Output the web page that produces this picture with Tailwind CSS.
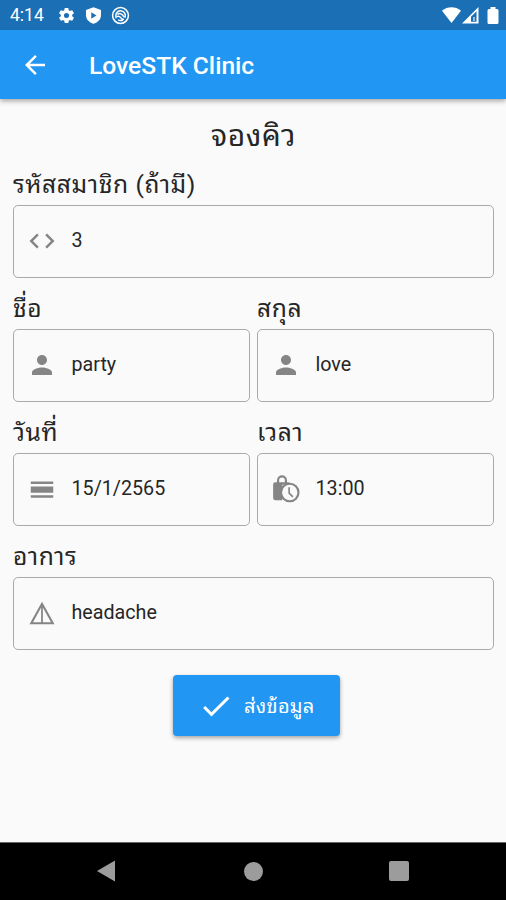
<!DOCTYPE html>
<html lang="th">
<head>
<meta charset="utf-8">
<title>LoveSTK Clinic</title>
<script src="https://cdn.jsdelivr.net/npm/@tailwindcss/browser@4"></script>
</head>
<body class="w-[506px] h-[900px] overflow-hidden bg-[#fafafa] text-[#262626] font-[Roboto,'Noto_Sans_Thai_Looped',Loma,Waree,Garuda,'Noto_Sans_Thai','Noto_Sans',sans-serif] flex flex-col">
<header class="bg-[#2196f3] h-[99px] shrink-0 shadow-[0_2px_5px_rgba(0,0,0,0.35)]">
  <div class="h-[30px] bg-[#1a6fb5] text-white flex items-center pl-[10px] pr-[7px]">
    <span class="text-[17.5px] w-[47px] leading-none pt-[2px]">4:14</span>
    <svg class="w-[19px] h-[19px]" viewBox="0 0 24 24" fill="currentColor"><path d="M19.14 12.94c.04-.3.06-.61.06-.94s-.02-.64-.07-.94l2.03-1.58a.49.49 0 0 0 .12-.61l-1.92-3.32a.49.49 0 0 0-.59-.22l-2.39.96a7 7 0 0 0-1.62-.94l-.36-2.54A.48.48 0 0 0 13.92 2.400h-3.84a.48.48 0 0 0-.48.410l-.36 2.540a7.200 7.200 0 0 0-1.620.940l-2.390-.960a.49.49 0 0 0-.59.220L2.740 8.870a.48.48 0 0 0 .12.610l2.030 1.580a6.900 6.900 0 0 0 0 1.880l-2.030 1.580a.49.49 0 0 0-.12.610l1.920 3.320c.12.22.37.29.59.22l2.390-.960c.5.38 1.030.7 1.620.94l.36 2.540c.05.24.24.41.48.41h3.840c.24 0 .44-.17.47-.41l.36-2.540a7 7 0 0 0 1.620-.940l2.390.960c.22.080.47 0 .59-.220l1.920-3.320a.48.48 0 0 0-.12-.610zM12 15.200A3.200 3.200 0 1 1 12 8.800a3.200 3.200 0 0 1 0 6.400z"/></svg>
    <svg class="ml-[8px] w-[19px] h-[19px]" viewBox="0 0 24 24" fill="currentColor" fill-rule="evenodd"><path d="M12 1.500L2.500 5V11.500c0 5.600 4 9.500 9.500 11 5.500-1.500 9.500-5.400 9.500-11V5zM9.200 8v8l6.500-4z"/></svg>
    <svg class="ml-[8px] w-[19px] h-[19px]" viewBox="0 0 24 24" fill="none" stroke="currentColor" stroke-width="1.900"><circle cx="12" cy="12" r="10"/><path d="M6.500 15.500C4.500 10 8 6 12 6c4.500 0 7.500 4.500 5.500 9M8 10.500c3-2 6.500-.5 8.500 3.500M7.500 13.500c3-1.500 4 .3 5 1.500s2 2 4 2M9 17.500c2 1 4 1 6 .2"/></svg>
    <div class="ml-auto flex items-center">
      <svg class="w-[19px] h-[16px]" viewBox="0 0 19 16" fill="currentColor"><path d="M0 3.700C5.500-.9 13.500-.9 19 3.700L9.500 16z"/></svg>
      <svg class="ml-[1px] w-[17px] h-[17px]" viewBox="0 0 17 17"><path fill="#fff" fill-rule="evenodd" d="M0 16.500L16.500 0v16.500zM9 9.700v5h5.500V4.300z"/><path fill="#fff" d="M11 10h2v4h-2z" opacity=".55"/></svg>
      <svg class="ml-[8px] w-[12px] h-[17px]" viewBox="0 0 12 17" fill="currentColor"><path d="M3.500 0h5v2H10a1.500 1.500 0 0 1 1.500 1.500v12A1.500 1.500 0 0 1 10 17H2a1.500 1.500 0 0 1-1.500-1.500v-12A1.500 1.500 0 0 1 2 2h1.500z"/></svg>
    </div>
  </div>
  <div class="h-[69px] flex items-center pl-[20px] text-white">
    <svg class="w-[30px] h-[30px]" viewBox="0 0 24 24" fill="currentColor"><path d="M20 11H7.830l5.590-5.590L12 4l-8 8 8 8 1.410-1.410L7.830 13H20z"/></svg>
    <h1 class="ml-[39px] pt-[3px] text-[24.600px] font-medium leading-none whitespace-nowrap">LoveSTK Clinic</h1>
  </div>
</header>

<main class="flex-1 pl-[13px] pr-[12px] flex flex-col">
  <h2 class="h-[64px] pt-[17px] text-center text-[30px] leading-[40px] tracking-[0.5px]">จองคิว</h2>
  <div class="flex flex-col">
    <label class="h-[42px] leading-[44px] text-[24.600px] tracking-[0.6px] whitespace-nowrap">รหัสสมาชิก (ถ้ามี)</label>
    <div class="h-[73px] border border-[#aaa] rounded-[5px] flex items-center pl-[13px] pb-[1px] text-[19.700px]">
      <svg class="w-[30px] h-[30px] text-[#858585]" viewBox="0 0 24 24" fill="currentColor"><path d="M9.400 16.600L4.800 12l4.600-4.600L8 6l-6 6 6 6zM14.600 16.600l4.600-4.600-4.600-4.600L16 6l6 6-6 6z"/></svg>
      <span class="ml-[14.500px] pb-[1px]">3</span>
    </div>
  </div>
  <div class="grid grid-cols-2 gap-x-[7px]">
    <div>
      <label class="block h-[51px] pt-[9px] leading-[44px] text-[24.600px] tracking-[0.6px]">ชื่อ</label>
      <div class="h-[73px] border border-[#aaa] rounded-[5px] flex items-center pl-[13px] pb-[1px] text-[19.700px]">
        <svg class="w-[30px] h-[30px] text-[#858585]" viewBox="0 0 24 24" fill="currentColor"><path d="M12 12c2.210 0 4-1.790 4-4s-1.790-4-4-4-4 1.790-4 4 1.790 4 4 4zm0 2c-2.670 0-8 1.340-8 4v2h16v-2c0-2.660-5.330-4-8-4z"/></svg>
        <span class="ml-[14.500px] pb-[1px]">party</span>
      </div>
    </div>
    <div>
      <label class="block h-[51px] pt-[9px] leading-[44px] text-[24.600px] tracking-[0.6px]">สกุล</label>
      <div class="h-[73px] border border-[#aaa] rounded-[5px] flex items-center pl-[13px] pb-[1px] text-[19.700px]">
        <svg class="w-[30px] h-[30px] text-[#858585]" viewBox="0 0 24 24" fill="currentColor"><path d="M12 12c2.210 0 4-1.790 4-4s-1.790-4-4-4-4 1.790-4 4 1.790 4 4 4zm0 2c-2.670 0-8 1.340-8 4v2h16v-2c0-2.660-5.330-4-8-4z"/></svg>
        <span class="ml-[14.500px] pb-[1px]">love</span>
      </div>
    </div>
    <div>
      <label class="block h-[51px] pt-[9px] leading-[44px] text-[24.600px] tracking-[0.6px]">วันที่</label>
      <div class="h-[73px] border border-[#aaa] rounded-[5px] flex items-center pl-[13px] pb-[1px] text-[19.700px]">
        <svg class="w-[30px] h-[30px] text-[#858585]" viewBox="0 0 24 24" fill="currentColor"><path d="M3 17h18v2H3zM3 10h18v5H3zM3 6h18v2H3z"/></svg>
        <span class="ml-[14.500px] pb-[1px]">15/1/2565</span>
      </div>
    </div>
    <div>
      <label class="block h-[51px] pt-[9px] leading-[44px] text-[24.600px] tracking-[0.6px]">เวลา</label>
      <div class="h-[73px] border border-[#aaa] rounded-[5px] flex items-center pl-[13px] pb-[1px] text-[19.700px]">
        <svg class="w-[30px] h-[30px] text-[#858585]" viewBox="0 0 24 24"><path fill="currentColor" fill-rule="evenodd" d="M3.500 6.500H4.800V5a4 4 0 0 1 8 0v1.500H14A2 2 0 0 1 15.800 8.500H9V21H3.500a1.800 1.800 0 0 1-1.800-1.800V8.300a1.800 1.800 0 0 1 1.800-1.800zM6.500 6.500h4.600V5a2.300 2.300 0 0 0-4.600 0z"/><circle cx="15" cy="14.800" r="7" fill="#fafafa" stroke="currentColor" stroke-width="1.700"/><path fill="none" stroke="currentColor" stroke-width="1.300" d="M14.500 10.500v4.800l3 3"/></svg>
        <span class="ml-[14.500px] pb-[1px]">13:00</span>
      </div>
    </div>
  </div>
  <div>
    <label class="block h-[51px] pt-[9px] leading-[44px] text-[24.600px] tracking-[0.6px]">อาการ</label>
    <div class="h-[73px] border border-[#aaa] rounded-[5px] flex items-center pl-[13px] pb-[1px] text-[19.700px]">
      <svg class="w-[30px] h-[30px] text-[#858585]" viewBox="0 0 24 24" fill="currentColor" fill-rule="evenodd"><path d="M12 3L2 21h20zM12.700 7.500L19.200 19.400H12.700zM11.300 7.500V19.400H4.800z"/></svg>
      <span class="ml-[14.500px] pb-[1px]">headache</span>
    </div>
  </div>
  <button class="mt-[25px] self-center ml-[6px] w-[167px] h-[61px] rounded-[4px] bg-[#2196f3] text-white shadow-[0_2px_4px_rgba(0,0,0,0.35)] flex items-center pl-[25px]">
    <svg class="w-[36px] h-[36px]" viewBox="0 0 24 24" fill="currentColor"><path d="M9 16.170L4.830 12l-1.420 1.410L9 19 21 7l-1.410-1.410z"/></svg>
    <span class="ml-[10px] pt-[1px] text-[20px] tracking-[0.3px] whitespace-nowrap">ส่งข้อมูล</span>
  </button>
</main>

<nav class="h-[58px] shrink-0 bg-black border-t border-[#666] text-[#9c9c9c] flex items-center pl-[96px] pb-[1px]">
  <svg class="w-[20px] h-[22px]" viewBox="0 0 20 22" fill="currentColor"><path d="M1 11L19 .5v21z"/></svg>
  <div class="ml-[128px] w-[19px] h-[19px] rounded-full bg-[#9c9c9c]"></div>
  <div class="ml-[126px] w-[20px] h-[20px] rounded-[2px] bg-[#9c9c9c]"></div>
</nav>
</body>
</html>
